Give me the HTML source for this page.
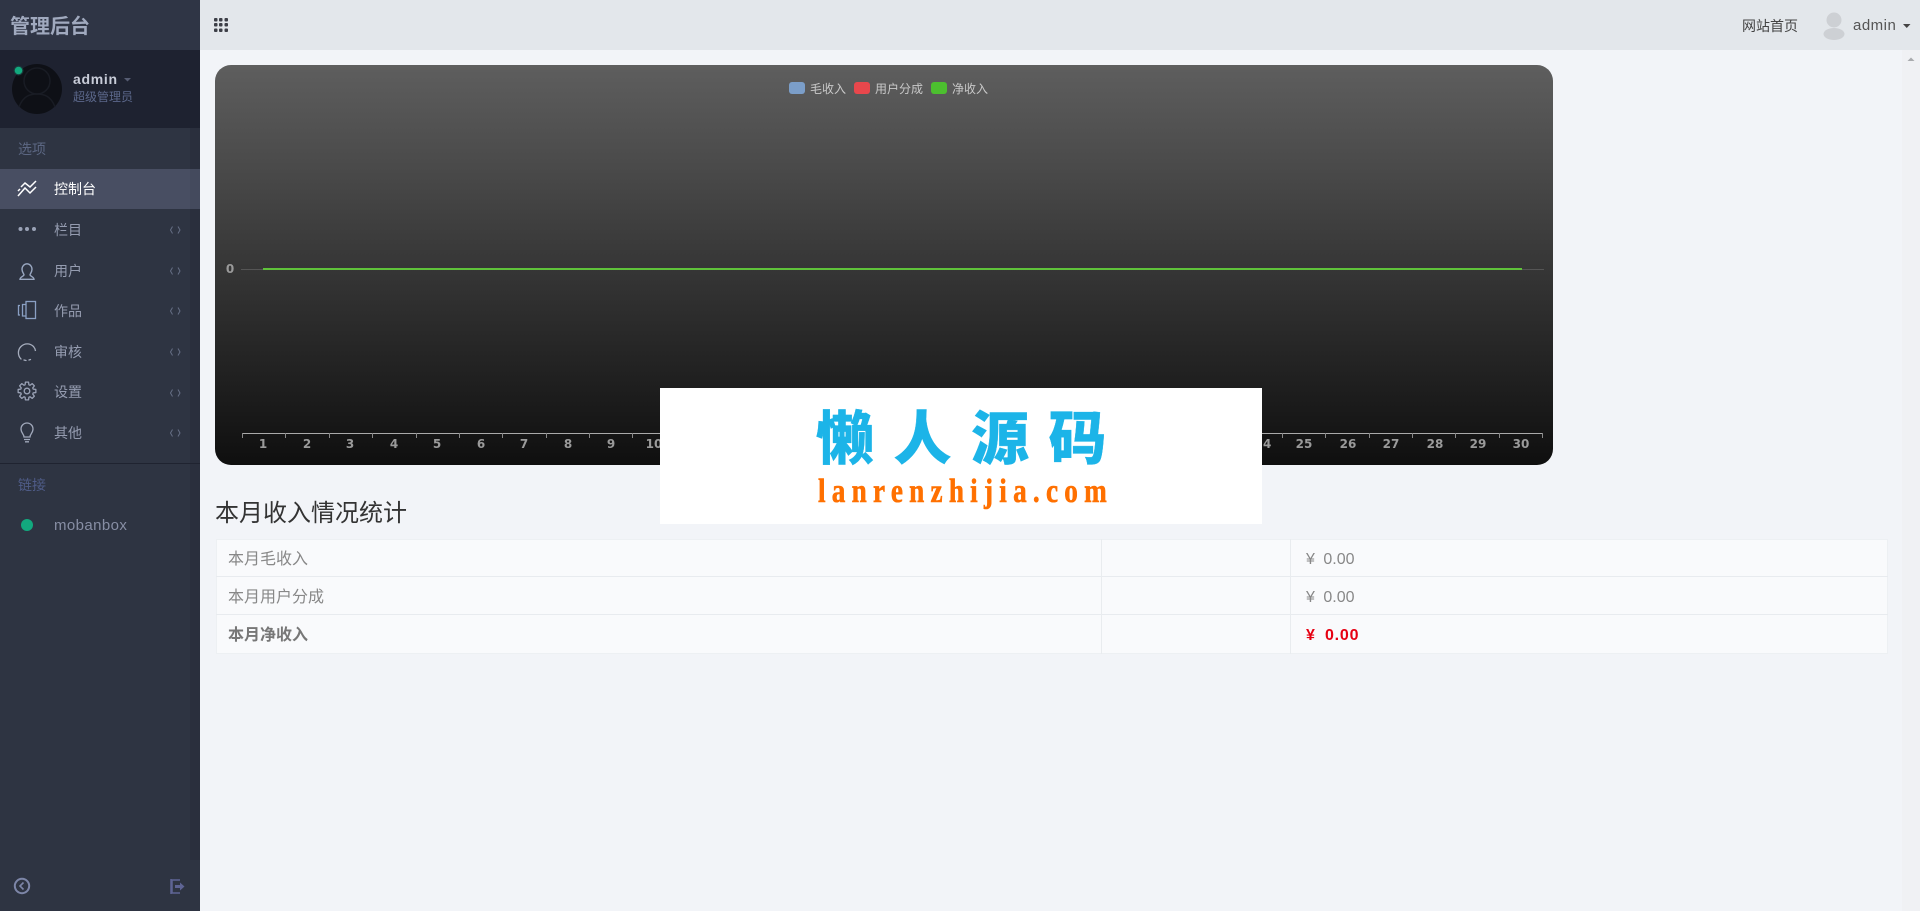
<!DOCTYPE html>
<html lang="zh">
<head>
<meta charset="utf-8">
<title>管理后台</title>
<style>
html,body{margin:0;padding:0;width:1920px;height:911px;overflow:hidden;background:#f2f4f8;font-family:"Liberation Sans","Noto Sans CJK SC",sans-serif;}
.a{position:absolute;white-space:nowrap;line-height:1;}
svg{position:absolute;overflow:visible;}
#side{position:absolute;left:0;top:0;width:200px;height:911px;background:#2e3442;}
.it{font-size:14px;color:#959cb0;left:54px;}
.lg{font-size:12px;color:#c9c9c9;top:83px;}
.sw{position:absolute;top:82px;width:16px;height:12px;border-radius:3px;}
.td{font-size:16px;color:#888;}
.yen{word-spacing:4px;}
</style>
</head>
<body>
<div id="side">
  <div class="a" style="left:190px;top:128px;width:10px;height:732px;background:#2a2f3d;"></div>
  <div class="a" style="left:0;top:0;width:200px;height:50px;background:#2f3545;"></div>
  <div class="a" style="left:10px;top:17px;font-size:20px;font-weight:700;color:#a0a9be;">管理后台</div>
  <div class="a" style="left:0;top:50px;width:200px;height:78px;background:#1e2230;"></div>
  <svg style="left:0;top:0" width="200" height="128">
    <circle cx="37" cy="89" r="25" fill="#0e1016"/>
    <circle cx="37" cy="81" r="13" fill="none" stroke="#191c24" stroke-width="1.500"/>
    <path d="M19 107 C23 96 30 94 37 94 C44 94 51 96 55 107" fill="none" stroke="#191c24" stroke-width="1.500"/>
    <circle cx="18.500" cy="70.500" r="5" fill="#1b3a3c"/>
    <circle cx="18.500" cy="70.500" r="3.800" fill="#12a97e"/>
    <path d="M124 78 h7 l-3.500 3.500z" fill="#565c72"/>
  </svg>
  <div class="a" style="left:73px;top:72px;font-size:14px;font-weight:700;color:#c8ccd8;letter-spacing:.7px;">admin</div>
  <div class="a" style="left:73px;top:91px;font-size:12px;color:#5b678a;">超级管理员</div>
  <div class="a" style="left:18px;top:142px;font-size:14px;color:#5c6783;">选项</div>
  <div class="a" style="left:0;top:169px;width:200px;height:40px;background:#484e62;"></div>
  <div class="a" style="left:190px;top:169px;width:10px;height:40px;background:#444a5d;"></div>
  <div class="a it" style="top:182px;color:#fff;">控制台</div>
  <div class="a it" style="top:223px;">栏目</div>
  <div class="a it" style="top:264px;">用户</div>
  <div class="a it" style="top:304px;">作品</div>
  <div class="a it" style="top:345px;">审核</div>
  <div class="a it" style="top:385px;">设置</div>
  <div class="a it" style="top:426px;">其他</div>
  <svg style="left:0;top:0" width="200" height="911" fill="none">
    <g stroke="#666f85" stroke-width="1">
      <path d="M172.500 226.500 L170.500 230 L172.500 233.500 M178 226.500 L180 230 L178 233.500"/>
      <path d="M172.500 267.500 L170.500 271 L172.500 274.500 M178 267.500 L180 271 L178 274.500"/>
      <path d="M172.500 307.500 L170.500 311 L172.500 314.500 M178 307.500 L180 311 L178 314.500"/>
      <path d="M172.500 348.500 L170.500 352 L172.500 355.500 M178 348.500 L180 352 L178 355.500"/>
      <path d="M172.500 389.500 L170.500 393 L172.500 396.500 M178 389.500 L180 393 L178 396.500"/>
      <path d="M172.500 429.500 L170.500 433 L172.500 436.500 M178 429.500 L180 433 L178 436.500"/>
    </g>
    <path d="M18 191 L20 189 M21 187 L25 183 L30 187 L36 181" stroke="#fff" stroke-width="1.500"/>
    <path d="M18 196 L25 188 L30 193 L36 187" stroke="#fff" stroke-width="1.500"/>
    <circle cx="20.500" cy="229" r="2" fill="#9aa2b6"/><circle cx="27" cy="229" r="2" fill="#9aa2b6"/><circle cx="34" cy="229" r="2" fill="#9aa2b6"/>
    <path d="M27 263.800 a5 5.500 0 0 1 5 5.500 c0 3-2 4.500-2 5.500 c0 1.500 4 2 4 4.500 h-14 c0-2.500 4-3 4-4.500 c0-1-2-2.500-2-5.500 a5 5.500 0 0 1 5-5.500z" stroke="#9aa8c2" stroke-width="1.400"/>
    <rect x="26" y="301.500" width="9.500" height="17" stroke="#8aa0c4" stroke-width="1.300"/>
    <path d="M26 304.500 h-3.500 v11.500 h3.500 M20 305.500 h-1.500 v9.500 h1.500" stroke="#8aa0c4" stroke-width="1.300"/>
    <path d="M33.500 346.500 A8.500 8.500 0 0 0 21 359 M24 360 l2 .5 M29 360 l1.500-.5" stroke="#a6adbd" stroke-width="1.300" stroke-linecap="round"/>
    <path d="M33.500 346.500 A8.500 8.500 0 0 1 35.500 351" stroke="#a6adbd" stroke-width="1.300"/>
    <circle cx="27" cy="391" r="2.800" stroke="#9aa2b6" stroke-width="1.300"/>
    <polygon transform="translate(27 391)" stroke="#9aa2b6" stroke-width="1.300" stroke-linejoin="round" points="6.22,-1.9 8.86,-1.56 8.86,1.56 6.22,1.9 5.74,3.05 7.37,5.16 5.16,7.37 3.05,5.74 1.9,6.22 1.56,8.86 -1.56,8.86 -1.9,6.22 -3.05,5.74 -5.16,7.37 -7.37,5.16 -5.74,3.05 -6.22,1.9 -8.86,1.56 -8.86,-1.56 -6.22,-1.9 -5.74,-3.05 -7.37,-5.16 -5.16,-7.37 -3.05,-5.74 -1.9,-6.22 -1.56,-8.86 1.56,-8.86 1.9,-6.22 3.05,-5.74 5.16,-7.37 7.37,-5.16 5.74,-3.05"/>
    <path d="M24 437 C24 434 21 433 21 429 a6 6 0 0 1 12 0 C33 433 30 434 30 437z M24 439.500 h6 M25 441.800 h4" stroke="#a0a8ba" stroke-width="1.300"/>
    <path d="M0 463.500 H200" stroke="#1f2330"/>
    <circle cx="27" cy="525" r="6" fill="#12a97e"/>
    <circle cx="22" cy="886" r="7.200" stroke="#7d86a8" stroke-width="2"/>
    <path d="M23.500 882.500 L20 886 L23.500 889.500" stroke="#7d86a8" stroke-width="1.600"/>
    <path d="M180 880 h-8 v13 h8 M171 879 v15" stroke="#5e6494" stroke-width="1.500"/>
    <path d="M175 885 h5 v-2.500 l4.500 4 -4.500 4 v-2.500 h-5z" fill="#5e6494"/>
  </svg>
  <div class="a" style="left:18px;top:478px;font-size:14px;color:#4f5c88;">链接</div>
  <div class="a" style="left:54px;top:518px;font-size:15px;color:#878ea4;letter-spacing:.400px;">mobanbox</div>
</div>

<div class="a" style="left:200px;top:0;width:1720px;height:50px;background:#e3e7eb;"></div>
<svg style="left:0;top:0" width="1920" height="50">
  <g fill="#3d3f47">
    <rect x="214" y="18" width="3.500" height="3.500" rx="1"/><rect x="219" y="18" width="3.500" height="3.500" rx="1"/><rect x="224.500" y="18" width="3.500" height="3.500" rx="1"/>
    <rect x="214" y="23" width="3.500" height="3.500" rx="1"/><rect x="219" y="23" width="3.500" height="3.500" rx="1"/><rect x="224.500" y="23" width="3.500" height="3.500" rx="1"/>
    <rect x="214" y="28.500" width="3.500" height="3.500" rx="1"/><rect x="219" y="28.500" width="3.500" height="3.500" rx="1"/><rect x="224.500" y="28.500" width="3.500" height="3.500" rx="1"/>
  </g>
  <circle cx="1834" cy="20" r="7.500" fill="#cdd0d4"/>
  <ellipse cx="1834" cy="34" rx="10.500" ry="6" fill="#cdd0d4"/>
  <path d="M1903 24 h7.500 l-3.750 4z" fill="#444"/>
</svg>
<div class="a" style="left:1742px;top:19px;font-size:14px;color:#444;">网站首页</div>
<div class="a" style="left:1853px;top:18px;font-size:15px;color:#555;letter-spacing:.500px;">admin</div>

<div class="a" style="left:1902px;top:50px;width:18px;height:861px;background:#f0f1f4;"></div>
<svg style="left:0;top:0" width="1920" height="70"><path d="M1907.500 61 h7 l-3.500-3.500z" fill="#a9abae"/></svg>

<div class="a" style="left:215px;top:65px;width:1338px;height:400px;border-radius:16px;background:linear-gradient(to bottom,#5e5e5e 0%,#0f0f0f 100%);"></div>
<div class="sw" style="left:789px;background:#7b9ec9;"></div>
<div class="a lg" style="left:810px;">毛收入</div>
<div class="sw" style="left:854px;background:#e8474c;"></div>
<div class="a lg" style="left:875px;">用户分成</div>
<div class="sw" style="left:931px;background:#4cbf2f;"></div>
<div class="a lg" style="left:952px;">净收入</div>

<svg style="left:0;top:0" width="1920" height="480" font-family="'DejaVu Sans',sans-serif" font-size="12" font-weight="700" fill="#9a9a9a" text-anchor="middle">
  <path d="M241 269.500 H1544" stroke="#555" stroke-width="1" fill="none"/>
  <path d="M263 269 H1522" stroke="#5fc23a" stroke-width="2" fill="none"/>
  <text x="230" y="273">0</text>
  <path d="M242 433.500 H1543" stroke="#aaa" stroke-width="1" fill="none"/>
  <path d="M242.500 433V438 M285.500 433V438 M329.500 433V438 M372.500 433V438 M416.500 433V438 M459.500 433V438 M502.500 433V438 M546.500 433V438 M589.500 433V438 M632.500 433V438 M1282.500 433V438 M1325.500 433V438 M1369.500 433V438 M1412.500 433V438 M1455.500 433V438 M1499.500 433V438 M1542.500 433V438" stroke="#888" stroke-width="1" fill="none"/>
  <text x="263" y="448">1</text><text x="307" y="448">2</text><text x="350" y="448">3</text><text x="394" y="448">4</text><text x="437" y="448">5</text><text x="481" y="448">6</text><text x="524" y="448">7</text><text x="568" y="448">8</text><text x="611" y="448">9</text><text x="654" y="448">10</text>
  <text x="1263" y="448">24</text><text x="1304" y="448">25</text><text x="1348" y="448">26</text><text x="1391" y="448">27</text><text x="1435" y="448">28</text><text x="1478" y="448">29</text><text x="1521" y="448">30</text>
</svg>

<div class="a" style="left:660px;top:388px;width:602px;height:136px;background:#fff;"></div>
<div class="a" style="left:816px;top:405px;font-size:58px;font-weight:900;letter-spacing:19.500px;color:#1cb4e8;-webkit-text-stroke:.3px #1cb4e8;font-family:'Noto Sans CJK SC',sans-serif;">懒人源码</div>
<div class="a" style="left:818px;top:474.500px;font-size:34px;font-weight:700;letter-spacing:7.800px;color:#ff7000;-webkit-text-stroke:.6px #ff7000;font-family:'Liberation Serif',serif;transform:scaleX(.8);transform-origin:0 0;">lanrenzhijia.com</div>

<div class="a" style="left:215px;top:502px;font-size:24px;color:#333;">本月收入情况统计</div>

<div class="a" style="left:216px;top:539px;width:1672px;height:115px;background:#f9fafc;box-sizing:border-box;border:1px solid #edf0f3;"></div>
<div class="a" style="left:216px;top:576px;width:1672px;height:1px;background:#e8ebef;"></div>
<div class="a" style="left:216px;top:614px;width:1672px;height:1px;background:#e8ebef;"></div>
<div class="a" style="left:1101px;top:539px;width:1px;height:115px;background:#e9ecef;"></div>
<div class="a" style="left:1290px;top:539px;width:1px;height:115px;background:#e9ecef;"></div>
<div class="a td" style="left:228px;top:552px;">本月毛收入</div>
<div class="a td" style="left:228px;top:590px;">本月用户分成</div>
<div class="a td" style="left:228px;top:628px;font-weight:700;color:#777;">本月净收入</div>
<div class="a td yen" style="left:1306px;top:552px;">¥ 0.00</div>
<div class="a td yen" style="left:1306px;top:590px;">¥ 0.00</div>
<div class="a td yen" style="left:1306px;top:628px;font-weight:700;color:#e60012;letter-spacing:.8px;">¥ 0.00</div>
</body>
</html>
